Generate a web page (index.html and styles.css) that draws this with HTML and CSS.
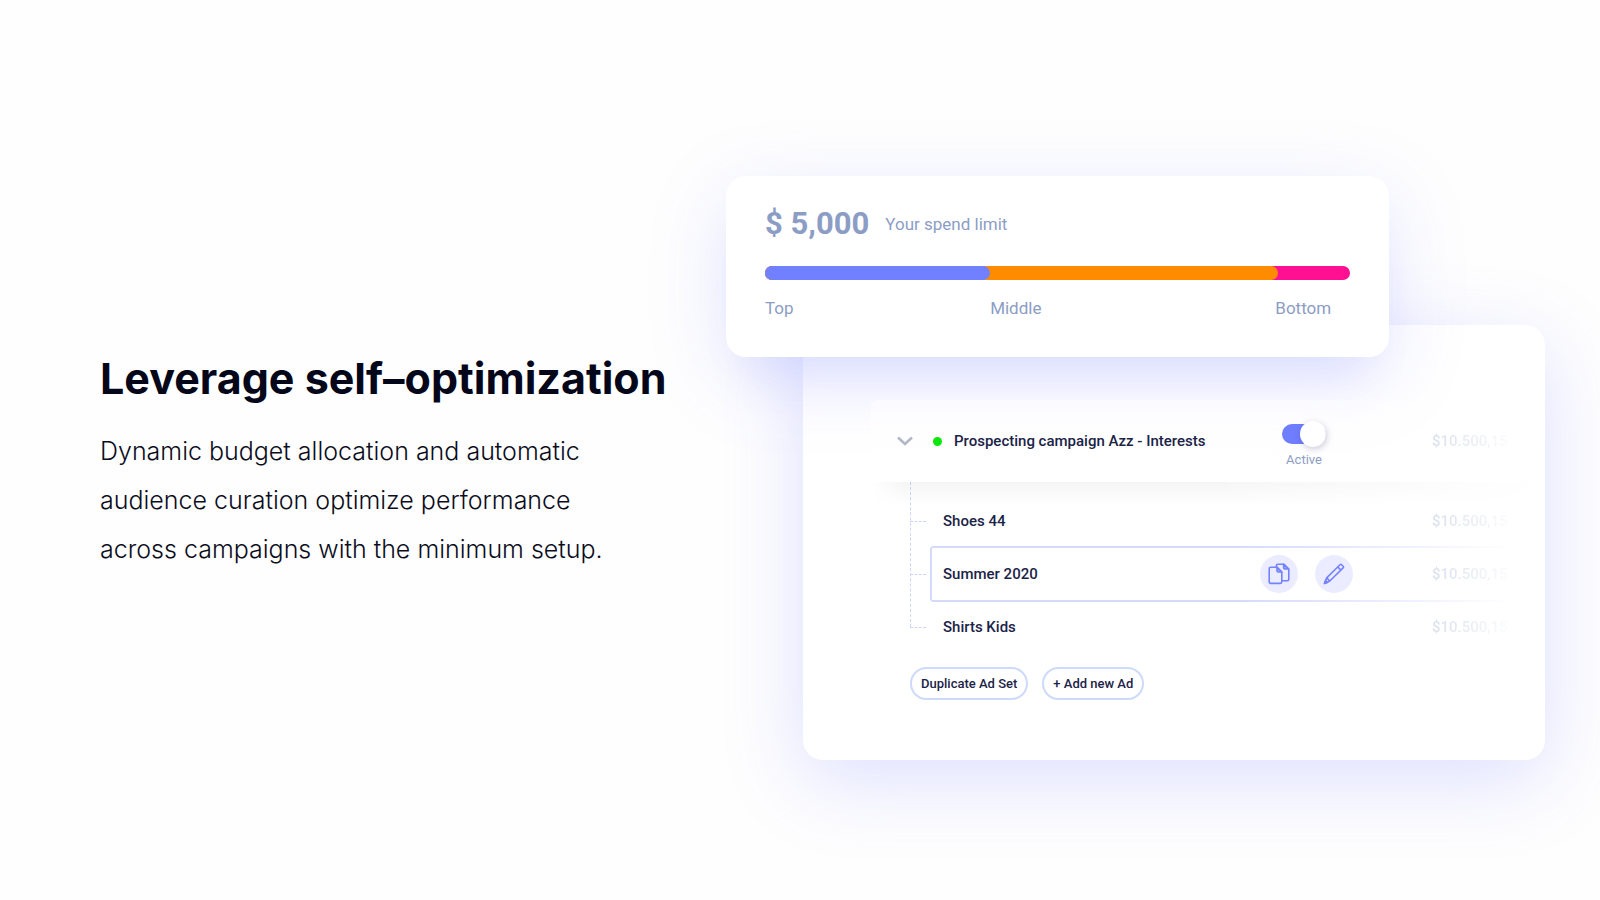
FILE: index.html
```html
<!DOCTYPE html>
<html lang="en">
<head>
    <meta charset="UTF-8">
    <meta name="viewport" content="width=device-width, initial-scale=1.0">
    <title>Leverage self–optimization</title>
    <link rel="stylesheet" href="styles.css">
</head>
<body>
    <main class="feature">
        <section class="feature-text">
            <h2>Leverage self–optimization</h2>
            <p>Dynamic budget allocation and automatic audience curation optimize performance across campaigns with the minimum setup.</p>
        </section>

        <section class="preview">
            <div class="card spend">
                <div class="spend-head">
                    <strong>$ 5,000</strong>
                    <span>Your spend limit</span>
                </div>
                <div class="bar">
                    <div class="bar-bottom"></div>
                    <div class="bar-middle"></div>
                    <div class="bar-top"></div>
                </div>
                <div class="bar-labels">
                    <span>Top</span>
                    <span>Middle</span>
                    <span>Bottom</span>
                </div>
            </div>

            <div class="card campaign">
                <div class="row campaign-head">
                    <div class="campaign-name">
                        <svg class="chevron" viewBox="0 0 18 10" width="18" height="10"><path d="M2 1.5l7 6.5 7-6.5" fill="none" stroke="#b3b7c6" stroke-width="2.6"/></svg>
                        <span class="dot"></span>
                        <span>Prospecting campaign Azz - Interests</span>
                    </div>
                    <div class="status">
                        <input type="checkbox" id="active" class="toggle" checked>
                        <label for="active">Active</label>
                    </div>
                    <span class="price">$10.500,15</span>
                </div>

                <ul class="ads">
                    <li class="row">
                        <span>Shoes 44</span>
                        <span class="price">$10.500,15</span>
                    </li>
                    <li class="row selected">
                        <span>Summer 2020</span>
                        <div class="actions">
                            <button type="button" class="icon-button" aria-label="Duplicate">
                                <svg viewBox="0 0 22 22" width="22" height="22" fill="none" stroke="#7582ff" stroke-width="1.6" stroke-linejoin="round">
                                    <path d="M2.8 4.2h6.2l4.8 4.8v9.8q0 1.6-1.6 1.6H2.8q-1.6 0-1.6-1.6V5.8q0-1.6 1.6-1.6z"/>
                                    <path d="M9 4.2v3.6q0 1.2 1.2 1.2h3.6z" fill="#aab2ff"/>
                                    <path d="M8.4 4V2.8q0-1.6 1.6-1.6h5.8L20.8 6v10.3q0 1.4-1.4 1.4h-5.4"/>
                                    <path d="M15.6 1.4v3.4q0 1.2 1.2 1.2h3.8z" fill="#aab2ff"/>
                                </svg>
                            </button>
                            <button type="button" class="icon-button" aria-label="Edit">
                                <svg viewBox="0 0 22 22" width="22" height="22" fill="none" stroke="#7582ff" stroke-width="1.6" stroke-linejoin="round">
                                    <path d="M1.5 20.5l2.2-5.6L17 1.8q.8-.8 1.6 0l1.5 1.5q.8.8 0 1.6L6.8 18z"/>
                                    <path d="M3.7 14.9l3.1 3.1M14.8 4l3.1 3.1"/>
                                    <path d="M1.5 20.5l1-3 2 2z" fill="#7582ff"/>
                                </svg>
                            </button>
                        </div>
                        <span class="price">$10.500,15</span>
                    </li>
                    <li class="row">
                        <span>Shirts Kids</span>
                        <span class="price">$10.500,15</span>
                    </li>
                </ul>

                <div class="buttons">
                    <button type="button">Duplicate Ad Set</button>
                    <button type="button">+ Add new Ad</button>
                </div>
            </div>
        </section>
    </main>
</body>
</html>
```
FILE: styles.css
```css
* {
    box-sizing: border-box;
}

body {
    margin: 0;
    background-color: #fefefe;
    color: #1b2347;
    font-family: Roboto, Arial, sans-serif;
}

.feature {
    display: grid;
    grid-template-columns: 626fr 819fr;
    align-items: center;
    min-height: 100vh;
    padding: 36px 55px 0 100px;
    overflow: hidden;
}

.feature-text {
    padding-bottom: 8px;
    color: #0b0d1c;
    font-family: Inter, Arial, sans-serif;
}

.feature-text h2 {
    margin: 0 0 26px;
    color: #04061a;
    font-size: 43px;
    font-weight: 700;
    line-height: 46px;
    white-space: nowrap;
}

.feature-text p {
    max-width: 540px;
    margin: 0;
    font-size: 25px;
    font-weight: 300;
    line-height: 49px;
}

.card {
    background-color: #fff;
    border-radius: 20px;
    box-shadow: 0 20px 80px rgba(105, 115, 255, 0.22);
}

/* Spend limit */
.spend {
    position: relative;
    z-index: 1;
    width: 81%;
    padding: 28px 39px 37px;
    box-shadow: 0 20px 80px rgba(105, 115, 255, 0.18), 0 40px 40px -20px rgba(105, 115, 255, 0.1);
    color: #8c9dc5;
}

.spend-head {
    display: flex;
    align-items: center;
    gap: 16px;
    font-size: 17px;
    line-height: 40px;
}

.spend-head strong {
    font-size: 31px;
}

.bar {
    display: grid;
    height: 14px;
    margin: 22px 0 16px;
}

.bar div {
    grid-area: 1 / 1;
    border-radius: 7px;
}

.bar-top {
    width: 38.5%;
    background-color: #7180ff;
}

.bar-middle {
    width: 87.7%;
    background-color: #ff8c00;
}

.bar-bottom {
    background-color: #ff0f92;
}

.bar-labels {
    display: grid;
    grid-template-columns: 225fr 285fr 75fr;
    font-size: 17px;
    line-height: 24px;
}

/* Campaign list */
.campaign {
    margin: -32px 0 0 77px;
    padding: 75px 0 60px 68px;
    font-size: 15px;
    font-weight: 500;
}

.row {
    display: grid;
    grid-template-columns: 1fr 172px 113px;
    align-items: center;
}

.campaign-head {
    position: relative;
    z-index: 2;
    height: 82px;
    background: linear-gradient(90deg, rgba(255, 255, 255, 0.5) 60%, rgba(255, 255, 255, 0));
    border-radius: 6px 0 0 6px;
}

/* Shadow under the row, fading out to the right */
.campaign-head::after {
    content: "";
    position: absolute;
    top: 100%;
    left: 0;
    right: 0;
    height: 24px;
    background: linear-gradient(rgba(0, 0, 0, 0.04), rgba(0, 0, 0, 0));
    -webkit-mask-image: linear-gradient(90deg, transparent, #000 5%, #000 50%, transparent);
    mask-image: linear-gradient(90deg, transparent, #000 5%, #000 50%, transparent);
}

.campaign-name {
    display: flex;
    align-items: center;
    padding-left: 25px;
}

.dot {
    width: 9px;
    height: 9px;
    margin: 0 12px 0 19px;
    background-color: #0be60b;
    border-radius: 50%;
}

.status {
    display: flex;
    flex-direction: column;
    align-items: center;
    gap: 8px;
    width: 88px;
    padding-top: 10px;
    color: #8c9dc5;
    font-size: 13px;
    font-weight: 400;
    line-height: 16px;
}

.toggle {
    appearance: none;
    display: flex;
    align-items: center;
    justify-content: flex-end;
    width: 44px;
    height: 20px;
    margin: 0;
    background-color: #6f7dff;
    border-radius: 10px;
    cursor: pointer;
}

.toggle::before {
    content: "";
    flex: none;
    width: 26px;
    height: 26px;
    background-color: #fff;
    border-radius: 50%;
    box-shadow: 1px 2px 6px rgba(60, 50, 110, 0.25);
}

.toggle:not(:checked) {
    justify-content: flex-start;
    background-color: #d5d9ea;
}

.price {
    grid-column: 3;
    justify-self: start;
    background: linear-gradient(90deg, #d9dfed, #fafbfd);
    -webkit-background-clip: text;
    background-clip: text;
    color: transparent;
}

.ads {
    position: relative;
    margin: 0 0 0 39px;
    padding: 14px 0 0 20px;
    list-style: none;
}

.ads::before {
    content: "";
    position: absolute;
    top: 0;
    bottom: 25px;
    left: 0;
    border-left: 1px dashed #cbd6f8;
}

.ads .row {
    position: relative;
    height: 50px;
    padding-left: 13px;
}

.ads .row::before {
    content: "";
    position: absolute;
    top: 50%;
    left: -20px;
    width: 16px;
    border-top: 1px dashed #cbd6f8;
}

.ads .selected {
    height: 56px;
}

.selected::after {
    content: "";
    position: absolute;
    inset: 0;
    border: 2px solid #d5d9fe;
    border-right: 0;
    border-radius: 3px 0 0 3px;
    -webkit-mask-image: linear-gradient(90deg, #000 50%, transparent 95%);
    mask-image: linear-gradient(90deg, #000 50%, transparent 95%);
    pointer-events: none;
}

.actions {
    display: flex;
    gap: 17px;
}

.icon-button {
    display: flex;
    align-items: center;
    justify-content: center;
    width: 38px;
    height: 38px;
    padding: 0;
    background-color: #ebecff;
    border: none;
    border-radius: 50%;
    cursor: pointer;
}

.buttons {
    display: flex;
    gap: 14px;
    margin: 15px 0 0 39px;
}

.buttons button {
    height: 33px;
    padding: 0 9px;
    background-color: #fff;
    border: 2px solid #cddafa;
    border-radius: 17px;
    color: inherit;
    font: inherit;
    font-size: 13px;
    cursor: pointer;
}

/* Stack the two columns on small screens */
@media (max-width: 1100px) {
    .feature {
        grid-template-columns: 1fr;
        gap: 40px;
        padding: 40px;
    }

    .feature-text h2 {
        white-space: normal;
    }
}
```
